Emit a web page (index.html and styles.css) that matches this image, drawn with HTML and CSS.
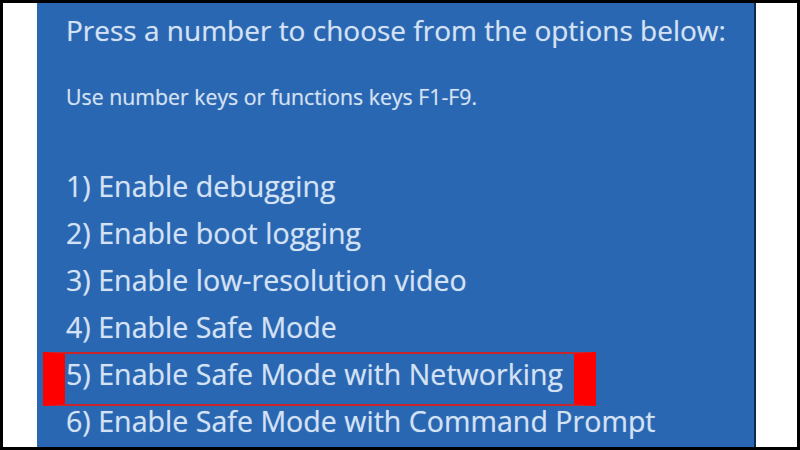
FILE: index.html
```html
<!DOCTYPE html>
<html>
<head>
<meta charset="utf-8">
<link rel="stylesheet" href="styles.css">
</head>
<body>
<div class="frame">
  <div class="screen">
    <div class="title">Press a number to choose from the options below:</div>
    <div class="hint">Use number keys or functions keys F1-F9.</div>
    <div class="options">
      <div class="item">1) Enable debugging</div>
      <div class="item">2) Enable boot logging</div>
      <div class="item">3) Enable low-resolution video</div>
      <div class="item">4) Enable Safe Mode</div>
      <div class="item"><span class="selected">5) Enable Safe Mode with Networking</span></div>
      <div class="item">6) Enable Safe Mode with Command Prompt</div>
    </div>
  </div>
</div>
</body>
</html>
```

FILE: styles.css
```css
html, body {
  margin: 0;
  padding: 0;
  background: #fff;
}

.frame {
  box-sizing: border-box;
  width: 800px;
  height: 450px;
  border: 3px solid #000;
  background: #fff;
  display: flex;
  padding: 0 41px 0 34px;
  overflow: hidden;
}

.screen {
  flex: 1;
  background: #2a67b2;
  border-right: 2px solid #10284a;
  padding: 10px 0 0 29px;
  color: #d3e2f4;
  font-family: "Open Sans", "Noto Sans", sans-serif;
  text-shadow: 0 0 1px rgba(211, 226, 244, 0.5);
  overflow: hidden;
}

.title {
  font-size: 28px;
  line-height: 34px;
  white-space: nowrap;
}

.hint {
  font-size: 21.3px;
  line-height: 24px;
  margin-top: 38px;
  white-space: nowrap;
}

.options {
  margin-top: 53px;
}

.item {
  font-size: 28.6px;
  line-height: 47px;
  white-space: nowrap;
}

.selected {
  display: inline-block;
  position: relative;
}

.selected::after {
  content: "";
  position: absolute;
  left: -23px;
  right: -33px;
  top: 2px;
  bottom: -9px;
  border: 2px solid #c8262c;
  border-left: 22px solid #ff0000;
  border-right: 22px solid #ff0000;
}
```
